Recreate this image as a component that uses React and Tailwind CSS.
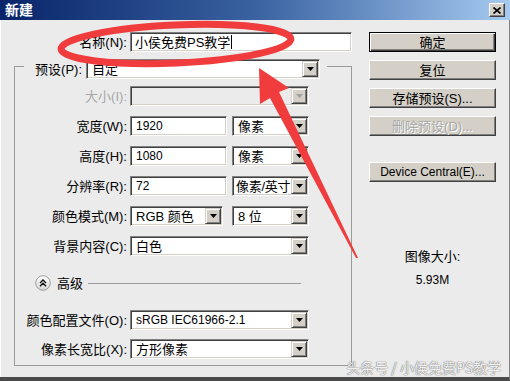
import React from 'react';

const sunken =
  'border border-t-[#808080] border-l-[#808080] border-r-white border-b-white shadow-[inset_1px_1px_0_#404040,inset_-1px_-1px_0_#d4d0c8]';
const raised =
  'bg-[#d4d0c8] border border-t-white border-l-white border-r-[#404040] border-b-[#404040] shadow-[inset_-1px_-1px_0_#808080]';

const DropArrow = ({ disabled }) => (
  <div className="w-[16px] h-full shrink-0 bg-[#d4d0c8] border border-t-[#d4d0c8] border-l-[#d4d0c8] border-r-[#404040] border-b-[#404040] shadow-[inset_1px_1px_0_#fff,inset_-1px_-1px_0_#808080] flex items-center justify-center">
    <svg width="7" height="4" viewBox="0 0 7 4">
      <path d="M0 0h7L3.5 4z" fill={disabled ? '#a0a0a0' : '#000'} />
    </svg>
  </div>
);

const Select = ({ value = '', className = '', disabled, latin, tight }) => (
  <div
    className={`${sunken} ${disabled ? 'bg-[#ebebeb]' : 'bg-white'} h-[20px] p-[1px] flex items-center ${className}`}
  >
    <span
      className={`flex-1 min-w-0 whitespace-nowrap ${tight ? 'pl-[2px] tracking-[-0.3px]' : 'pl-[4px]'} ${
        latin ? 'text-[12px]' : ''
      }`}
    >
      {value}
    </span>
    <DropArrow disabled={disabled} />
  </div>
);

const Field = ({ value, className = '' }) => (
  <div className={`${sunken} bg-white h-[20px] flex items-center pl-[5px] text-[12px] ${className}`}>
    {value}
  </div>
);

const Row = ({ label, disabled, children, className = '' }) => (
  <div className={`flex items-center h-[20px] ${className}`}>
    <div className={`w-[115px] pr-[3px] text-right whitespace-nowrap ${disabled ? 'text-[#a7a7a7]' : ''}`}>
      {label}
    </div>
    {children}
  </div>
);

const Btn = ({ children, primary, disabled, latin }) => (
  <div
    className={`h-[20px] flex items-center justify-center whitespace-nowrap ${
      primary
        ? 'bg-[#d4d0c8] border border-black shadow-[inset_1px_1px_0_#fff,inset_-1px_-1px_0_#404040,inset_-2px_-2px_0_#808080]'
        : raised
    } ${disabled ? 'text-[#a7a7a7] [text-shadow:1px_1px_0_#fff]' : ''} ${latin ? 'text-[12px]' : ''}`}
  >
    {children}
  </div>
);

export default function App() {
  return (
    <div className="relative w-[510px] h-[381px] overflow-hidden flex flex-col bg-[#ebebeb] text-[13px] text-black font-['Liberation_Sans','Noto_Sans_CJK_SC',sans-serif] leading-none">
      {/* Title bar */}
      <div className="h-[20px] shrink-0 flex items-center justify-between pl-[5px] pr-[5px] bg-linear-to-r from-[#0a246a] via-[#3a62a0] to-[#a6caf0]">
        <span className="text-white font-bold text-[14px]">新建</span>
        <div className={`${raised} w-[16px] h-[14px] flex items-center justify-center`}>
          <svg width="8" height="7" viewBox="0 0 8 7">
            <path d="M0.5 0.5l7 6M7.5 0.5l-7 6" stroke="#000" strokeWidth="1.6" />
          </svg>
        </div>
      </div>

      {/* Body */}
      <div className="flex-1 flex border-r border-r-[#808080] border-b-[4px] border-b-[#4a4a4a] shadow-[inset_1px_0_0_#fff]">
        {/* Left column */}
        <div className="w-[352px] shrink-0 flex flex-col">
          <div className="flex items-center h-[20px] mt-[12px]">
            <div className="w-[130px] pr-[3px] text-right">名称(N):</div>
            <div className={`${sunken} bg-white h-[20px] w-[222px] flex items-center pl-[4px]`}>
              小侯免费PS教学
              <span className="w-px h-[14px] bg-black ml-px" />
            </div>
          </div>

          <fieldset className="ml-[14px] w-[338px] mt-[2px] border border-[#9a9a9a] pb-[6px]">
            <legend className="ml-[9px] pt-[5px] pr-[7px]">
              <div className="flex items-center">
                <div className="w-[62px] pr-[4px] text-right">预设(P):</div>
                <Select value="自定" className="w-[234px]" />
              </div>
            </legend>

            <div className="pt-[7px] flex flex-col">
              <Row label="大小(I):" disabled>
                <Select disabled className="w-[179px]" />
              </Row>
              <Row label="宽度(W):" className="mt-[10px]">
                <Field value="1920" className="w-[97px]" />
                <Select value="像素" className="ml-[5px] w-[77px]" />
              </Row>
              <Row label="高度(H):" className="mt-[10px]">
                <Field value="1080" className="w-[97px]" />
                <Select value="像素" className="ml-[5px] w-[77px]" />
              </Row>
              <Row label="分辨率(R):" className="mt-[10px]">
                <Field value="72" className="w-[97px]" />
                <Select value="像素/英寸" tight className="ml-[5px] w-[77px]" />
              </Row>
              <Row label="颜色模式(M):" className="mt-[10px]">
                <Select value="RGB 颜色" className="w-[93px]" />
                <Select value="8 位" className="ml-[9px] w-[77px]" />
              </Row>
              <Row label="背景内容(C):" className="mt-[10px]">
                <Select value="白色" className="w-[179px]" />
              </Row>

              {/* Advanced */}
              <div className="flex items-center h-[16px] mt-[19px] ml-[20px] mr-[50px]">
                <svg width="16" height="16" viewBox="0 0 16 16" className="shrink-0">
                  <defs>
                    <linearGradient id="adv" x1="0" y1="0" x2="0" y2="1">
                      <stop offset="0" stopColor="#ffffff" />
                      <stop offset="1" stopColor="#d6d6d6" />
                    </linearGradient>
                  </defs>
                  <circle cx="8" cy="8" r="7.3" fill="url(#adv)" stroke="#9c9c9c" />
                  <path d="M5 8l3-3 3 3M5 11.2l3-3 3 3" fill="none" stroke="#111" strokeWidth="1.4" />
                </svg>
                <span className="ml-[6px]">高级</span>
                <div className="flex-1 h-px bg-[#9a9a9a] ml-[5px]" />
              </div>

              <Row label="颜色配置文件(O):" className="mt-[19px]">
                <Select value="sRGB IEC61966-2.1" latin className="w-[179px]" />
              </Row>
              <Row label="像素长宽比(X):" className="mt-[9px]">
                <Select value="方形像素" className="w-[179px]" />
              </Row>
            </div>
          </fieldset>
        </div>

        {/* Right column */}
        <div className="ml-[17px] w-[127px] shrink-0 flex flex-col pt-[12px]">
          <Btn primary>确定</Btn>
          <div className="mt-[8px]">
            <Btn>复位</Btn>
          </div>
          <div className="mt-[8px]">
            <Btn>存储预设(S)...</Btn>
          </div>
          <div className="mt-[8px]">
            <Btn disabled>删除预设(D)...</Btn>
          </div>
          <div className="mt-[26px]">
            <Btn latin>Device Central(E)...</Btn>
          </div>
          <div className="mt-[66px] h-[16px] flex items-center justify-center">图像大小:</div>
          <div className="mt-[8px] h-[16px] flex items-center justify-center text-[12px]">5.93M</div>
        </div>
      </div>

      {/* Red annotation */}
      <svg
        className="absolute inset-0 pointer-events-none"
        width="510"
        height="381"
        viewBox="0 0 510 381"
      >
        <ellipse
          cx="176"
          cy="44"
          rx="115"
          ry="19"
          transform="rotate(-2.5 176 44)"
          fill="none"
          stroke="#f03c3c"
          strokeWidth="7"
        />
        <polygon
          points="259,68 289,88 279,92 358,258 356,258 270,98 260,104"
          fill="#f03c3c"
        />
      </svg>

      {/* Watermark */}
      <div className="absolute right-[9px] bottom-[7px] text-[14px] text-white/90 font-['Noto_Sans_CJK_SC',sans-serif] [text-shadow:0_0_1px_#666,0_0_1px_#666] pointer-events-none">
        头条号 / 小侯免费PS教学
      </div>
    </div>
  );
}
